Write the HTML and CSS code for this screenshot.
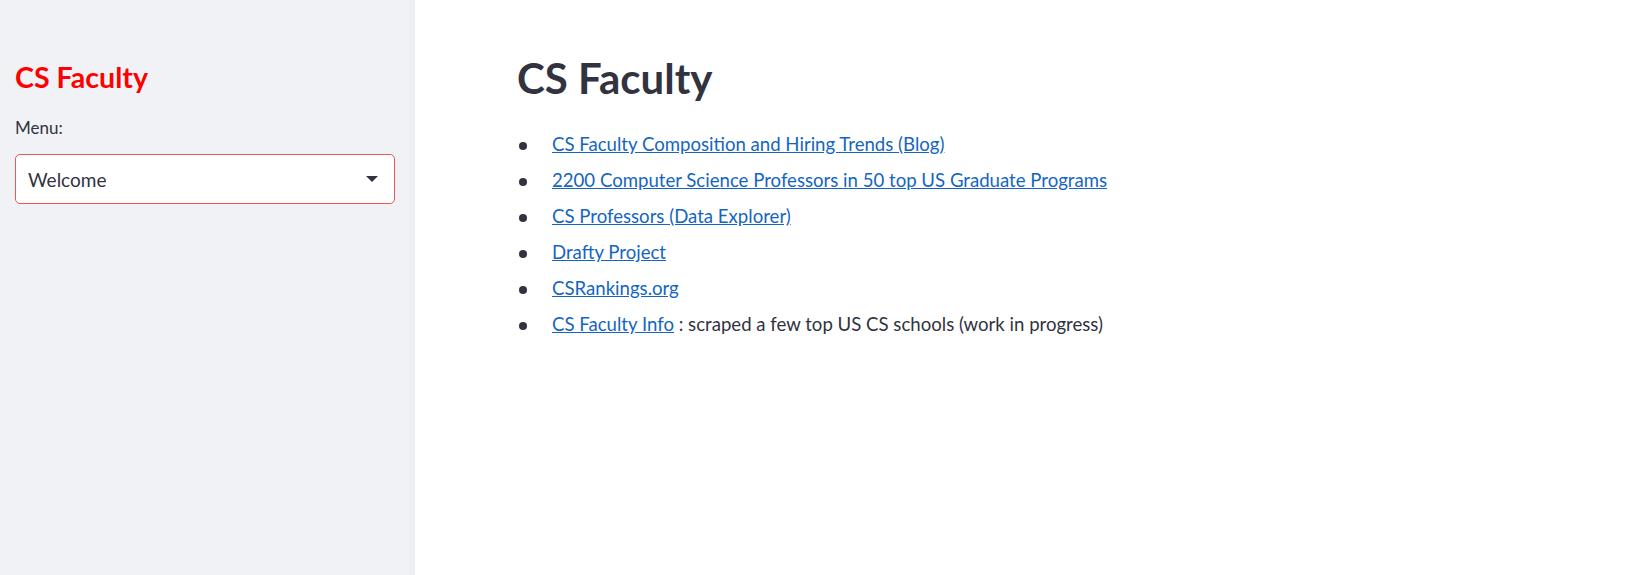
FILE: index.html
```html
<!DOCTYPE html>
<html>
<head>
<meta charset="utf-8">
<link rel="stylesheet" href="styles.css">
</head>
<body>
<div class="app">
  <aside class="sidebar">
    <div class="sidebar-inner">
      <h2 class="side-title">CS Faculty</h2>
      <label class="field-label">Menu:</label>
      <div class="select">
        <span class="select-value">Welcome</span>
        <svg class="select-arrow" width="12" height="6" viewBox="0 0 12 6"><path d="M0 0 H12 L6 6 Z" fill="#31333f"/></svg>
      </div>
    </div>
    <div class="sidebar-edge"></div>
  </aside>
  <main class="main">
    <div class="content">
      <h1 class="title">CS Faculty</h1>
      <ul class="links">
        <li><a href="#">CS Faculty Composition and Hiring Trends (Blog)</a></li>
        <li><a href="#">2200 Computer Science Professors in 50 top US Graduate Programs</a></li>
        <li><a href="#">CS Professors (Data Explorer)</a></li>
        <li><a href="#">Drafty Project</a></li>
        <li><a href="#">CSRankings.org</a></li>
        <li><a href="#">CS Faculty Info</a> : scraped a few top US CS schools (work in progress)</li>
      </ul>
    </div>
  </main>
</div>
</body>
</html>
```

FILE: styles.css
```css
* { box-sizing: border-box; }
html, body {
  margin: 0;
  padding: 0;
  height: 100%;
  background: #ffffff;
  font-family: "Lato", "Noto Sans", sans-serif;
  color: #31333f;
}
.app {
  display: flex;
  height: 575px;
}
.sidebar {
  width: 415px;
  flex: none;
  background: #f0f2f6;
  display: flex;
}
.sidebar-inner {
  flex: 1;
  padding: 60px 14px 0 15px;
}
.sidebar-edge {
  width: 6px;
  background: #edeff3;
}
.side-title {
  margin: 0;
  font-size: 28.6px;
  font-weight: 700;
  color: #ff0000;
  line-height: 34px;
}
.field-label {
  display: block;
  margin-top: 23px;
  font-size: 17px;
  line-height: 22px;
  color: #31333f;
}
.select {
  margin-top: 15px;
  height: 50px;
  border: 1px solid #e05a5a;
  border-radius: 5px;
  background: #ffffff;
  display: flex;
  align-items: center;
  justify-content: space-between;
  padding: 0 16px 0 12px;
}
.select-value {
  font-size: 19px;
  color: #31333f;
}
.main {
  flex: 1;
}
.content {
  padding: 52px 0 0 102px;
}
.title {
  margin: 0;
  font-size: 42px;
  font-weight: 700;
  line-height: 52px;
  color: #31333f;
}
.links {
  margin: 28px 0 0 0;
  padding: 0;
  list-style: none;
  font-size: 18.6px;
  line-height: 24px;
}
.links li {
  padding-left: 35px;
  margin-bottom: 12px;
}
.links li::before {
  content: "";
  display: inline-block;
  width: 8px;
  height: 8px;
  border-radius: 50%;
  background: #31333f;
  margin-left: -33px;
  margin-right: 25px;
  vertical-align: middle;
}
.links a {
  color: #1565c0;
  text-decoration: underline;
}
```
